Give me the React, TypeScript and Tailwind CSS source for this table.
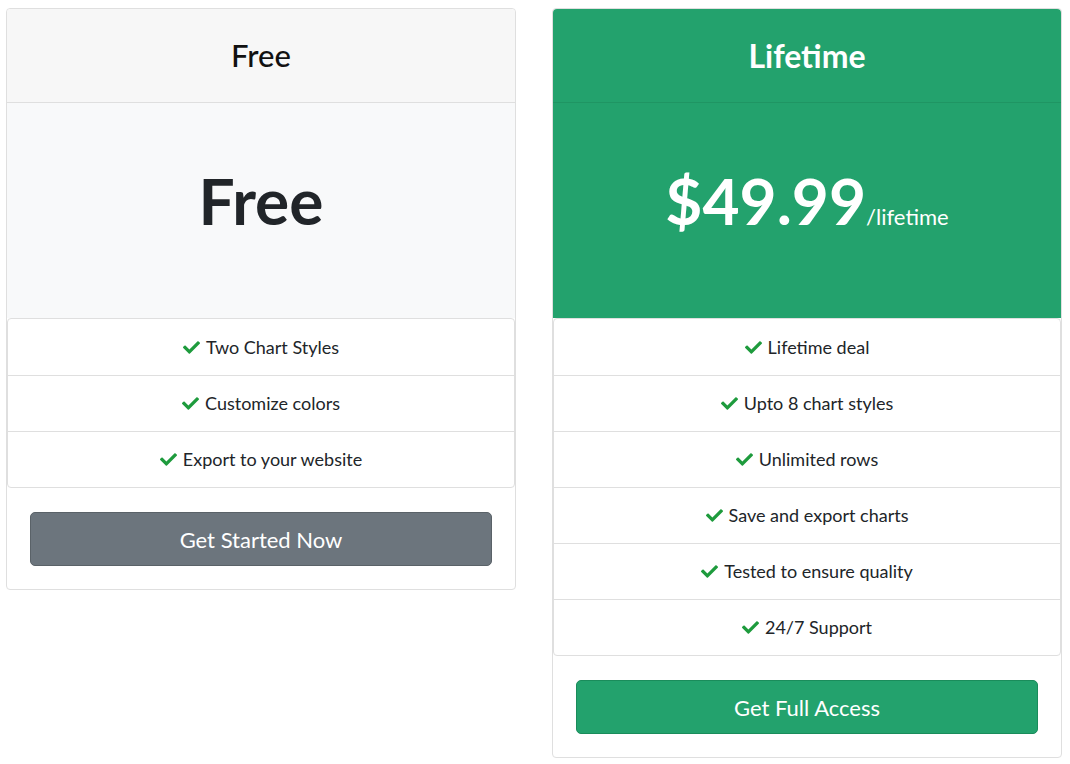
import { FaCheck } from 'react-icons/fa';

const freeFeatures = ['Two Chart Styles', 'Customize colors', 'Export to your website'];
const lifetimeFeatures = [
  'Lifetime deal',
  'Upto 8 chart styles',
  'Unlimited rows',
  'Save and export charts',
  'Tested to ensure quality',
  '24/7 Support',
];

function Features({ items }: { items: string[] }) {
  return (
    <ul className="border border-[#dfdfdf] rounded-[4px] bg-white">
      {items.map((item, i) => (
        <li
          key={item}
          className={`h-[56px] flex items-center justify-center text-[18px] text-[#212529] ${
            i > 0 ? 'border-t border-[#dfdfdf]' : ''
          }`}
        >
          <FaCheck className="text-[#1e9b3d] w-[17px] h-[17px] mr-[6px]" />
          <span>{item}</span>
        </li>
      ))}
    </ul>
  );
}

export default function App() {
  return (
    <div className="min-h-screen bg-white pt-[8px] pl-[6px] font-['Lato',sans-serif]">
      <div className="flex items-start gap-[36px]">
        {/* Free plan */}
        <div className="w-[510px] border border-[#dfdfdf] rounded-[4px] bg-white flex flex-col">
          <div className="h-[94px] flex items-center justify-center bg-[#f7f7f7] border-b border-[#dfdfdf] rounded-t-[4px]">
            <h2 className="text-[31px] font-medium text-[#111]">Free</h2>
          </div>
          <div className="h-[215px] pb-[20px] flex items-center justify-center bg-[#f8f9fa]">
            <span className="text-[64px] font-bold leading-none text-[#212529]">Free</span>
          </div>
          <Features items={freeFeatures} />
          <div className="pt-[24px] pb-[23px] px-[23px]">
            <button className="w-full h-[54px] rounded-[5px] bg-[#6c757d] border border-[#5a6268] text-white text-[22px]">
              Get Started Now
            </button>
          </div>
        </div>

        {/* Lifetime plan */}
        <div className="w-[510px] border border-[#dfdfdf] rounded-[4px] bg-white flex flex-col">
          <div className="h-[94px] flex items-center justify-center bg-[#23a26d] border-b border-[#1f9563] rounded-t-[4px]">
            <h2 className="text-[32px] font-bold text-white">Lifetime</h2>
          </div>
          <div className="h-[215px] pb-[20px] flex items-center justify-center bg-[#23a26d]">
            <div className="flex items-baseline">
              <span className="text-[64px] font-bold leading-none text-white">$49.99</span>
              <span className="text-[22px] font-normal text-white">/lifetime</span>
            </div>
          </div>
          <Features items={lifetimeFeatures} />
          <div className="pt-[24px] pb-[23px] px-[23px]">
            <button className="w-full h-[54px] rounded-[5px] bg-[#23a26d] border border-[#1a8c5b] text-white text-[22px]">
              Get Full Access
            </button>
          </div>
        </div>
      </div>
    </div>
  );
}
